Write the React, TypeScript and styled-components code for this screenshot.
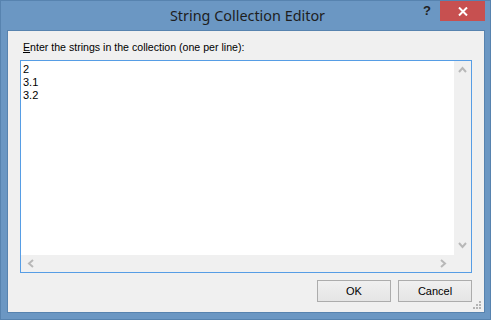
import styled, { createGlobalStyle } from 'styled-components';

const Global = createGlobalStyle`
  html, body {
    margin: 0;
    padding: 0;
    background: #6b97c3;
  }
  * { box-sizing: border-box; }
`;

const Window = styled.div`
  width: 491px;
  height: 320px;
  background: #6b97c3;
  border: 1px solid #5783af;
  display: flex;
  flex-direction: column;
`;

const TitleBar = styled.div`
  height: 29px;
  display: grid;
  grid-template-columns: 1fr auto 1fr;
  align-items: start;
`;

const Title = styled.div`
  grid-column: 2;
  font-family: 'Noto Sans', 'Open Sans', sans-serif;
  font-size: 14.4px;
  color: #1e1e1e;
  line-height: 29px;
  padding-left: 4px;
`;

const Controls = styled.div`
  grid-column: 3;
  justify-self: end;
  display: flex;
  margin-right: 5px;
`;

const HelpButton = styled.div`
  width: 26px;
  height: 20px;
  display: flex;
  align-items: center;
  justify-content: center;
  font-family: 'Liberation Sans', Arial, sans-serif;
  font-weight: bold;
  font-size: 13px;
  color: #222;
  padding-bottom: 2px;
`;

const CloseButton = styled.div`
  width: 45px;
  height: 20px;
  background: #c75050;
  display: flex;
  align-items: center;
  justify-content: center;
`;

const Frame = styled.div`
  flex: 1;
  padding: 0 5px 6px 6px;
  display: flex;
`;

const Client = styled.div`
  flex: 1;
  position: relative;
  background: #f0f0f0;
  border: 1px solid #5783af;
  padding: 9px 12px 10px 12px;
  display: flex;
  flex-direction: column;
  font-family: 'Liberation Sans', Arial, sans-serif;
  font-size: 11px;
  color: #000;
`;

const Label = styled.div`
  height: 13px;
  line-height: 13px;
  margin-left: 3px;
  margin-top: 1px;
  font-size: 10.6px;
`;

const TextBox = styled.div`
  margin-top: 6px;
  height: 213px;
  border: 1px solid #569de5;
  background: #fff;
  display: grid;
  grid-template-columns: 1fr 17px;
  grid-template-rows: 1fr 17px;
`;

const Lines = styled.div`
  padding: 2px 2px;
  line-height: 13px;
  white-space: pre;
`;

const ScrollBar = styled.div`
  background: #f0f0f0;
  display: flex;
  align-items: center;
  justify-content: space-between;
`;

const VScroll = styled(ScrollBar)`
  flex-direction: column;
  padding: 5px 0 6px;
`;

const HScroll = styled(ScrollBar)`
  flex-direction: row;
  padding: 0 7px 0 6px;
`;

const Buttons = styled.div`
  margin-top: 7px;
  display: flex;
  justify-content: flex-end;
  gap: 7px;
`;

const Button = styled.div`
  width: 74px;
  height: 22px;
  border: 1px solid #acacac;
  background: linear-gradient(#f0f0f0, #e5e5e5);
  display: flex;
  align-items: center;
  justify-content: center;
`;

const Grip = styled.svg`
  position: absolute;
  right: 1px;
  bottom: 1px;
`;

const Chevron = ({ dir }: { dir: 'up' | 'down' | 'left' | 'right' }) => {
  const pts = {
    up: '1,6 4.5,2 8,6',
    down: '1,2 4.5,6 8,2',
    left: '6,1 2,4.5 6,8',
    right: '2,1 6,4.5 2,8',
  }[dir];
  const vertical = dir === 'up' || dir === 'down';
  return (
    <svg width={vertical ? 9 : 8} height={vertical ? 8 : 9}>
      <polyline points={pts} fill="none" stroke="#b8b8b8" strokeWidth="2" />
    </svg>
  );
};

export default function App() {
  return (
    <>
      <Global />
      <Window>
        <TitleBar>
          <Title>String Collection Editor</Title>
          <Controls>
            <HelpButton>?</HelpButton>
            <CloseButton>
              <svg width="10" height="9" viewBox="0 0 10 9">
                <path d="M1 0.5 L9 8.5 M9 0.5 L1 8.5" stroke="#fff" strokeWidth="2" />
              </svg>
            </CloseButton>
          </Controls>
        </TitleBar>
        <Frame>
          <Client>
            <Label>
              <u>E</u>nter the strings in the collection (one per line):
            </Label>
            <TextBox>
              <Lines>{'2\n3.1\n3.2'}</Lines>
              <VScroll>
                <Chevron dir="up" />
                <Chevron dir="down" />
              </VScroll>
              <HScroll>
                <Chevron dir="left" />
                <Chevron dir="right" />
              </HScroll>
              <ScrollBar />
            </TextBox>
            <Buttons>
              <Button>OK</Button>
              <Button>Cancel</Button>
            </Buttons>
            <Grip width="10" height="10">
              {[
                [6, 0],
                [3, 3],
                [6, 3],
                [0, 6],
                [3, 6],
                [6, 6],
              ].map(([x, y]) => (
                <rect key={`${x}-${y}`} x={x} y={y} width="2" height="2" fill="#b4b4b4" />
              ))}
            </Grip>
          </Client>
        </Frame>
      </Window>
    </>
  );
}
